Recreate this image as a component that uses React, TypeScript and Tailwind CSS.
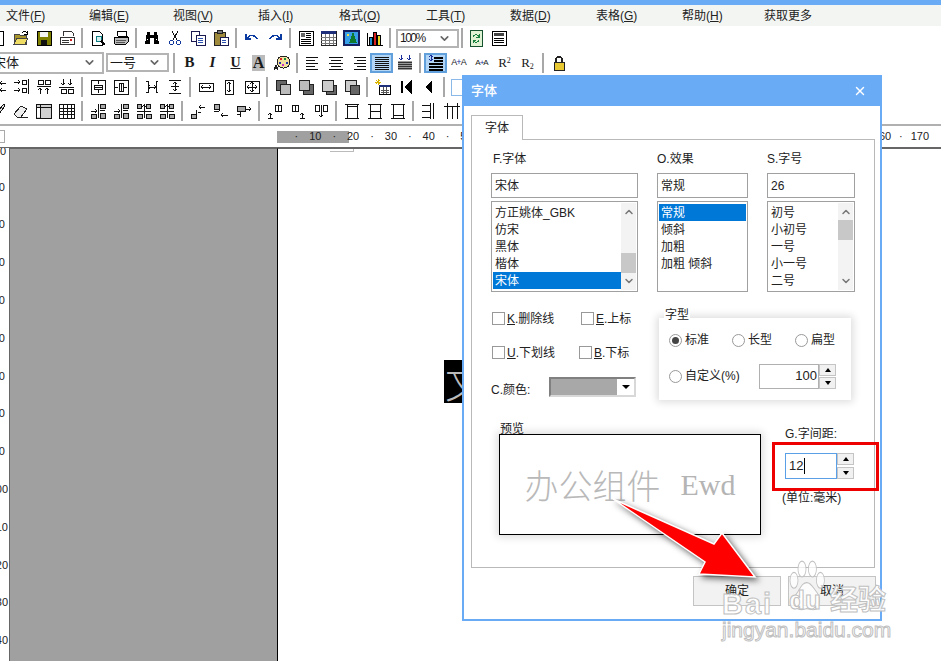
import type { ReactNode } from "react";
import { ChevronDown, ChevronUp, X } from "lucide-react";

const menus = [
  { label: "文件", key: "F", w: "w-[83px]" },
  { label: "编辑", key: "E", w: "w-[84px]" },
  { label: "视图", key: "V", w: "w-[85px]" },
  { label: "插入", key: "I", w: "w-[81px]" },
  { label: "格式", key: "O", w: "w-[87px]" },
  { label: "工具", key: "T", w: "w-[84px]" },
  { label: "数据", key: "D", w: "w-[86px]" },
  { label: "表格", key: "G", w: "w-[86px]" },
  { label: "帮助", key: "H", w: "w-[82px]" },
];

// 16x16 toolbar glyphs, line work only
const lines: Record<string, string> = {
  ar0: "M10 4h6M12 2l-2 2 2 2M10 11h6M12 9l-2 2 2 2",
  ar1: "M1 3h6M5 1l2 2-2 2M9 1h4v4H9zM15 0v15M1 11h6M5 9l2 2-2 2M9 9h4v4H9z",
  ar2: "M2 1h5v4H2zM9 1h5v4H9zM1 7h14M4 9v6M2 11l2-2 2 2M11 9v6M9 11l2-2 2 2",
  ar3: "M4 0v6M2 4l2 2 2-2M11 0v6M9 4l2 2 2-2M0 8h15M2 10h5v4H2zM9 10h5v4H9z",
  box1: "M1 1h14v14H1zM4 6h8v4H4zM8 2v3M8 11v3M4 8h8",
  box2: "M1 1h14v14H1zM6 4h4v8H6zM2 8h3M11 8h3M8 4v8",
  sp1: "M2 2h2v11H2M14 2h-2v11h2M5 8h6M6 6l-2 2 2 2M10 6l2 2-2 2",
  sp2: "M2 1h12M2 14h12M8 3v9M6 5l2-2 2 2M6 10l2 2 2-2M4 7h8",
  wd: "M1 4h14v8H1zM3 8h10M5 6l-2 2 2 2M11 6l2 2-2 2",
  ht: "M4 1h8v14H4zM8 3v10M6 5l2-2 2 2M6 11l2 2 2-2",
  both: "M1 2h14v12H1zM8 3v10M3 8h10M6 5l2-2 2 2M6 11l2 2 2-2M5 6l-2 2 2 2M11 6l2 2-2 2",
  up1: "M3 15v-5M1 12l2-2 2 2M8 2h6v6H8zM11 2v6M1 15h5",
  up2: "M2 2h6v6H2zM5 2v6M12 15v-5M10 12l2-2 2 2M10 15h5",
  up3: "M2 2h4v6H2zM10 2h4v6h-4zM8 2v12M6 12l2 2 2-2",
  fr1: "M1 1h14M1 15h14M3 1v14M13 1v14M3 3h10",
  fr2: "M1 1h14M1 15h14M3 1v14M13 1v14M3 8h10",
  fr3: "M1 1h14M1 15h14M3 1v14M13 1v14M3 12h10",
  tb1: "M1 2h8M1 8h8M1 14h8M9 0v16M12 0v16",
  tb2: "M0 3h16M3 3v13M8 3v13M13 3v13M3 0v3M13 0v3",
  left: "M1 2h12M1 5h9M1 8h12M1 11h9M1 14h12",
  center: "M1 2h14M3 5h10M1 8h14M3 11h10M1 14h14",
  right: "M3 2h12M6 5h9M3 8h12M6 11h9M3 14h12",
  just: "M1 2h14M1 4h14M1 6h14M1 8h14M1 10h14M1 12h14M1 14h14",
};

const shapes: Record<string, ReactNode> = {
  new: <rect x="3" y="1" width="10" height="14" fill="#fff" stroke="#000" />,
  open: (
    <>
      <path d="M1 14V4h5l1 1h6v9z" fill="#a8952c" stroke="#444" />
      <path d="M1 14l3-6h11l-3 6z" fill="#efdc62" stroke="#444" />
      <path d="M9 3c2-2 4-2 5 0M14 1v3h-3" stroke="#000" fill="none" />
    </>
  ),
  save: (
    <>
      <rect x="1" y="1" width="14" height="14" fill="#7f7f00" stroke="#000" />
      <rect x="4" y="2" width="8" height="5" fill="#f4f4f4" />
      <rect x="5" y="10" width="6" height="5" fill="#111" />
    </>
  ),
  fax: (
    <>
      <path d="M4 6V1h8l2 2v3" fill="#fff" stroke="#333" />
      <rect x="1" y="7" width="14" height="7" fill="#fff" stroke="#333" />
      <path d="M3 10h7M3 12h7" stroke="#333" />
      <rect x="11" y="9" width="2" height="2" fill="#c22" />
    </>
  ),
  prev: (
    <>
      <path d="M2 1h7l3 3v11H2z" fill="#fff" stroke="#000" />
      <circle cx="9" cy="9" r="3" fill="#d6eef0" stroke="#0b7d80" />
      <path d="M11 11l4 4" stroke="#000" strokeWidth="2" />
    </>
  ),
  print: (
    <>
      <path d="M4 1h9l1 5H5z" fill="#fff" stroke="#000" />
      <path d="M1 7h14v5l-2 2H2l-1-2z" fill="#bbb" stroke="#000" />
      <path d="M3 10h10M3 12h9" stroke="#555" />
    </>
  ),
  bino: (
    <>
      <path d="M3 2h3v3h4V2h3l2 12h-5V8H6v6H1z" fill="#000" />
      <path d="M3 9h1M12 9h1" stroke="#fff" />
    </>
  ),
  scis: (
    <>
      <path d="M5 1l5 9M11 1L6 10" stroke="#111" />
      <circle cx="4.5" cy="12.5" r="2" fill="none" stroke="#12389c" />
      <circle cx="11.5" cy="12.5" r="2" fill="none" stroke="#12389c" />
    </>
  ),
  copy: (
    <>
      <rect x="1" y="1" width="8" height="10" fill="#fff" stroke="#1a1a50" />
      <rect x="6" y="5" width="9" height="10" fill="#fff" stroke="#1a1a50" />
      <path d="M8 8h5M8 10h5M8 12h5" stroke="#2b50b0" />
    </>
  ),
  paste: (
    <>
      <rect x="1" y="2" width="11" height="13" fill="#a08a3c" stroke="#222" />
      <rect x="4" y="0" width="5" height="3" fill="#777" stroke="#222" />
      <rect x="7" y="7" width="8" height="8" fill="#fff" stroke="#1a1a50" />
      <path d="M9 10h4M9 12h4" stroke="#2b50b0" />
    </>
  ),
  undo: <path d="M3 8c3-4 8-3 10 1M2 4v5h5" fill="none" stroke="#0b3aa0" strokeWidth="1.5" />,
  redo: <path d="M13 8c-3-4-8-3-10 1M14 4v5H9" fill="none" stroke="#0b3aa0" strokeWidth="1.5" />,
  tbox: (
    <>
      <rect x="1" y="1" width="14" height="14" fill="#fff" stroke="#000" />
      <rect x="3" y="3" width="4" height="4" fill="#666" />
      <path d="M8 3h5M8 5h5M8 7h5M3 9h10M3 11h10M3 13h10" stroke="#000" />
    </>
  ),
  table: (
    <>
      <rect x="0" y="1" width="15" height="14" fill="#fff" stroke="#222" />
      <rect x="0" y="1" width="15" height="3" fill="#1f2f7a" />
      <path d="M0 7h15M0 10h15M0 13h15M4 4v11M8 4v11M12 4v11" stroke="#777" />
    </>
  ),
  pic: (
    <>
      <rect x="0" y="1" width="15" height="14" fill="#37a0e8" stroke="#14205f" strokeWidth="2" />
      <path d="M9 2l4 11H5z" fill="#0e7a2e" />
      <rect x="3" y="4" width="2" height="2" fill="#f3e04a" />
    </>
  ),
  chart: (
    <>
      <path d="M0 15h16M0 3v12" stroke="#000" />
      <rect x="2" y="7" width="3" height="8" fill="#1c8fd0" stroke="#000" />
      <rect x="6" y="2" width="3" height="13" fill="#d22" stroke="#000" />
      <rect x="10" y="5" width="3" height="10" fill="#e8d820" stroke="#000" />
    </>
  ),
  sync: (
    <>
      <rect x="2" y="0" width="12" height="16" fill="#dff2d4" stroke="#14532d" />
      <path d="M5 7c1-3 5-3 6 0M5 10c1 3 5 3 6 0M11 4v3H8M5 13v-3h3" stroke="#16803c" fill="none" />
    </>
  ),
  doc: (
    <>
      <rect x="1" y="1" width="14" height="14" fill="#fff" stroke="#000" />
      <rect x="3" y="3" width="10" height="3" fill="#444" />
      <path d="M3 8h10M3 10h10M3 12h10" stroke="#000" />
    </>
  ),
  paint: (
    <>
      <ellipse cx="9.5" cy="7" rx="6.5" ry="6" fill="#f3e1a0" stroke="#222" />
      <rect x="6" y="3" width="2" height="2" fill="#d22" />
      <rect x="10" y="3" width="2" height="2" fill="#1a8f3a" />
      <rect x="12" y="7" width="2" height="2" fill="#23a" />
      <rect x="5" y="7" width="2" height="2" fill="#23a" />
      <rect x="8" y="9" width="2" height="2" fill="#c3c" />
      <path d="M0 15l2-5 2 5M1 13h2" stroke="#222" fill="none" />
    </>
  ),
  dist: (
    <>
      <rect x="1" y="6" width="14" height="9" fill="#999" />
      <path d="M1 7h14M1 9h14M1 11h14M1 13h14" stroke="#333" />
      <path d="M4 0v5M2 3l2 2 2-2M12 0v5M10 3l2 2 2-2" stroke="#1c2e9a" fill="none" />
    </>
  ),
  space: (
    <>
      <path d="M6 3h9M6 6h9M1 9h14M1 12h14M1 15h14" stroke="#000" strokeWidth="2" />
      <path d="M3 0v6M1 2l2-2 2 2M1 4l2 2 2-2" stroke="#1c2e9a" fill="none" />
    </>
  ),
  lock: (
    <>
      <path d="M5 7V4c0-3 6-3 6 0v3" fill="none" stroke="#222" strokeWidth="1.5" />
      <rect x="3" y="7" width="10" height="8" fill="#e8c832" stroke="#222" />
    </>
  ),
  ov1: (
    <>
      <rect x="1" y="1" width="10" height="10" fill="#666" stroke="#222" />
      <rect x="5" y="5" width="10" height="10" fill="#bbb" stroke="#222" />
    </>
  ),
  ov2: (
    <>
      <rect x="5" y="5" width="10" height="10" fill="#666" stroke="#222" />
      <rect x="1" y="1" width="10" height="10" fill="#bbb" stroke="#222" />
    </>
  ),
  ov3: (
    <>
      <rect x="5" y="6" width="10" height="9" fill="#666" stroke="#222" />
      <rect x="1" y="1" width="11" height="11" fill="#ccc" stroke="#222" />
    </>
  ),
  ov4: (
    <>
      <rect x="1" y="1" width="11" height="11" fill="#ccc" stroke="#222" />
      <rect x="6" y="6" width="9" height="9" fill="#666" stroke="#222" />
    </>
  ),
  spark: (
    <>
      <path d="M3 0v6M0 3h6M1 1l4 4M5 1L1 5" stroke="#d8b400" />
      <rect x="4" y="6" width="11" height="9" fill="#fff" stroke="#000" />
      <rect x="4" y="6" width="11" height="2" fill="#1f2f7a" />
      <path d="M6 11h8M6 13h8M8 8v7M11 8v7" stroke="#555" />
    </>
  ),
  first: <path d="M3 2h2v12H3zM14 1v14L6 8z" fill="#000" />,
  back: <path d="M11 1v14L4 8z" fill="#000" />,
  pencil: <path d="M14 1l1 2-7 9-3 1 1-3z" fill="#ddd" stroke="#111" />,
  erase: (
    <>
      <path d="M1 11l7-8 6 3-6 8H4z" fill="#eee" stroke="#222" />
      <path d="M4 14h11" stroke="#222" />
    </>
  ),
  tshade: (
    <>
      <rect x="0" y="1" width="15" height="14" fill="#d0d0d0" stroke="#111" />
      <path d="M0 4h15M4 1v14" stroke="#111" />
      <rect x="1" y="5" width="3" height="9" fill="#fff" />
    </>
  ),
  tgrid: (
    <>
      <rect x="0" y="1" width="15" height="14" fill="#fff" stroke="#111" />
      <path d="M0 5h15M0 8h15M0 11h15M4 1v14M8 1v14M12 1v14" stroke="#111" />
    </>
  ),
  col1: (
    <>
      <rect x="10" y="1" width="5" height="4" fill="#aaa" stroke="#111" />
      <rect x="10" y="10" width="5" height="5" fill="#aaa" stroke="#111" />
      <rect x="1" y="11" width="5" height="4" fill="#aaa" stroke="#111" />
      <path d="M10 7h5M8 1v14M1 8h6M5 6l2 2-2 2" stroke="#111" fill="none" />
    </>
  ),
  row1: (
    <>
      <rect x="1" y="1" width="4" height="4" fill="#aaa" stroke="#111" />
      <rect x="10" y="1" width="4" height="4" fill="#aaa" stroke="#111" />
      <rect x="1" y="11" width="5" height="4" fill="#aaa" stroke="#111" />
      <rect x="10" y="11" width="5" height="4" fill="#aaa" stroke="#111" />
      <path d="M1 8h14M8 1v14M6 4l2-2 2 2" stroke="#111" fill="none" />
    </>
  ),
  cell1: (
    <>
      <rect x="1" y="11" width="5" height="4" fill="#aaa" stroke="#111" />
      <path d="M6 7v8M9 4h6M11 2l-2 2 2 2M8 9h3" stroke="#111" fill="none" />
    </>
  ),
  cell2: (
    <>
      <rect x="1" y="1" width="5" height="5" fill="#aaa" stroke="#111" />
      <path d="M6 6v2M1 8h5M8 12h7M10 10l-2 2 2 2" stroke="#111" fill="none" />
    </>
  ),
  cell3: (
    <>
      <rect x="1" y="3" width="8" height="5" fill="#aaa" stroke="#111" />
      <path d="M4 8v6M1 11h3M9 6h6M13 4l2 2-2 2" stroke="#111" fill="none" />
    </>
  ),
};

const texts: Record<string, ReactNode> = {
  B: <span className="font-['Liberation_Serif',serif] text-[15px] font-bold">B</span>,
  I: <span className="font-['Liberation_Serif',serif] text-[15px] font-bold italic">I</span>,
  U: <span className="font-['Liberation_Serif',serif] text-[14px] font-bold underline">U</span>,
  A: <span className="bg-[#bbb] px-[1px] font-['Liberation_Serif',serif] text-[16px] leading-[16px] font-bold">A</span>,
  wide: <span className="text-[9px] tracking-[-1px] whitespace-nowrap">A<span className="text-[#1c2e9a]">+</span>A</span>,
  narrow: <span className="text-[8px] tracking-[-1px] whitespace-nowrap">A<span className="text-[#1c2e9a]">+</span>A</span>,
  sup: <span className="font-['Liberation_Serif',serif] text-[13px]">R<sup className="text-[8px]">2</sup></span>,
  sub: <span className="font-['Liberation_Serif',serif] text-[13px]">R<sub className="text-[8px]">2</sub></span>,
};

function Icon({ name }: { name: string }) {
  if (texts[name]) return <>{texts[name]}</>;
  return (
    <svg width="16" height="16" viewBox="0 0 16 16" shapeRendering="crispEdges" className="overflow-visible">
      {lines[name] ? <path d={lines[name]} fill="none" stroke="#111" /> : shapes[name]}
    </svg>
  );
}

function Tools({ items }: { items: string[] }) {
  return (
    <>
      {items.map((it, i) =>
        it === "|" ? (
          <div key={i} className="flex w-[8px] shrink-0 justify-center">
            <div className="h-[20px] w-[2px] bg-[#a8a8a8]" />
          </div>
        ) : (
          <div
            key={i}
            className={
              it === "just" || it === "space"
                ? "flex h-[20px] w-[23px] shrink-0 items-center justify-center border-2 border-[#62a0dc] bg-[#b3d5f5]"
                : "flex h-[20px] w-[23px] shrink-0 items-center justify-center"
            }
          >
            <Icon name={it} />
          </div>
        )
      )}
    </>
  );
}

function Combo({ text, cls }: { text: string; cls: string }) {
  return (
    <div className={"flex shrink-0 items-center justify-between border-2 border-[#b4b4b4] bg-white pl-[2px] pr-[6px] " + cls}>
      <span className="whitespace-nowrap">{text}</span>
      <ChevronDown size={13} strokeWidth={3} className="text-[#666]" />
    </div>
  );
}

function Listbox({
  items,
  selected,
  thumb,
  cls,
}: {
  items: string[];
  selected?: number;
  thumb?: string;
  cls: string;
}) {
  return (
    <div className={"flex h-[91px] justify-between border border-[#a0a0a0] bg-white p-[1px] " + cls}>
      <div className="flex-1 overflow-hidden pt-[1px]">
        {items.map((t, i) => (
          <div
            key={t}
            className={
              i === selected
                ? "flex h-[17px] items-center bg-[#0078d7] pl-[2px] text-white"
                : "flex h-[17px] items-center pl-[2px] text-[#222]"
            }
          >
            {t}
          </div>
        ))}
      </div>
      {thumb && (
        <div className="flex w-[15px] flex-col items-center justify-between bg-[#f2f3f2] text-[#777]">
          <ChevronUp size={12} strokeWidth={3} className="mt-[3px]" />
          <ChevronDown size={12} strokeWidth={3} className="mb-[3px]" />
          <div className={"absolute h-[20px] w-[15px] bg-[#c8c8c8] " + thumb} />
        </div>
      )}
    </div>
  );
}

function Check({ k, label, cls }: { k: string; label: string; cls: string }) {
  return (
    <div className={"flex items-center " + cls}>
      <div className="h-[13px] w-[13px] border border-[#999] bg-white" />
      <span className="ml-[2px] text-[#222]">
        <span className="underline">{k}</span>.{label}
      </span>
    </div>
  );
}

function Radio({ label, on, cls }: { label: string; on?: boolean; cls: string }) {
  return (
    <div className={"flex items-center " + cls}>
      <div className="flex h-[13px] w-[13px] items-center justify-center rounded-full border border-[#999] bg-white">
        {on && <div className="h-[7px] w-[7px] rounded-full bg-[#444]" />}
      </div>
      <span className="ml-[3px] text-[#222]">{label}</span>
    </div>
  );
}

function Spin() {
  return (
    <div className="flex w-[17px] flex-col justify-between">
      <div className="flex h-[12px] items-center justify-center border border-[#c4c4c4] bg-[#f1f1f1]">
        <div className="h-0 w-0 border-x-[3px] border-b-[4px] border-x-transparent border-b-black" />
      </div>
      <div className="flex h-[12px] items-center justify-center border border-[#c4c4c4] bg-[#f1f1f1]">
        <div className="h-0 w-0 border-x-[3px] border-t-[4px] border-x-transparent border-t-black" />
      </div>
    </div>
  );
}

function FontDialog() {
  return (
    <div className="absolute left-[462px] top-[75px] flex h-[546px] w-[420px] flex-col border-x-2 border-b-2 border-[#6aabf6] bg-white text-[12px]">
      <div className="-mx-[2px] flex h-[31px] shrink-0 items-center justify-between bg-[#6aabf6] pl-[9px] pr-[15px] text-white">
        <span className="text-[13px] font-medium">字体</span>
        <X size={14} strokeWidth={2.5} />
      </div>
      <div className="flex flex-1 flex-col pl-[7px] pr-[5px] pt-[9px]">
        <div className="relative z-10 -mb-px flex h-[25px] w-[52px] items-center justify-center border border-b-0 border-[#b9b9b9] bg-white text-[#222]">
          字体
        </div>
        <div className="h-[429px] border border-[#b9b9b9] px-[19px] pt-[10px]">
          <div className="flex gap-[19px]">
            <div className="w-[147px]">
              <div className="h-[18px] pl-[2px] leading-[18px] text-[#222]">F.字体</div>
              <div className="mt-[5px] flex h-[25px] items-center border border-[#a0a0a0] pl-[3px] text-[#222]">宋体</div>
              <Listbox
                cls="relative mt-[3px]"
                items={["方正姚体_GBK", "仿宋", "黑体", "楷体", "宋体"]}
                selected={4}
                thumb="top-[51px] right-[1px]"
              />
            </div>
            <div className="w-[91px]">
              <div className="h-[18px] leading-[18px] text-[#222]">O.效果</div>
              <div className="mt-[5px] flex h-[25px] items-center border border-[#a0a0a0] pl-[3px] text-[#222]">常规</div>
              <Listbox cls="mt-[3px]" items={["常规", "倾斜", "加粗", "加粗 倾斜"]} selected={0} />
            </div>
            <div className="w-[88px]">
              <div className="h-[18px] leading-[18px] text-[#222]">S.字号</div>
              <div className="mt-[5px] flex h-[25px] items-center border border-[#a0a0a0] pl-[3px] text-[#222]">26</div>
              <Listbox
                cls="relative mt-[3px]"
                items={["初号", "小初号", "一号", "小一号", "二号"]}
                thumb="top-[18px] right-[1px]"
              />
            </div>
          </div>

          <div className="mt-[20px] flex">
            <div className="w-[168px]">
              <div className="flex h-[13px] items-center">
                <Check k="K" label="删除线" cls="ml-[1px] w-[89px]" />
                <Check k="E" label="上标" cls="" />
              </div>
              <div className="mt-[21px] flex h-[13px] items-center">
                <Check k="U" label="下划线" cls="ml-[1px] w-[87px]" />
                <Check k="B" label="下标" cls="" />
              </div>
              <div className="mt-[18px] flex h-[20px] items-center">
                <span className="mt-[6px] w-[58px] text-[#222]">C.颜色:</span>
                <div className="flex h-[20px] w-[87px] items-stretch border-2 border-[#808080] border-b-[#d8d8d8] border-r-[#d8d8d8] bg-[#a8a8a8]">
                  <div className="flex-1" />
                  <div className="flex w-[17px] items-center justify-center bg-white">
                    <div className="h-0 w-0 border-x-[4px] border-t-[4px] border-x-transparent border-t-black" />
                  </div>
                </div>
              </div>
            </div>
            <div className="relative mt-[6px] h-[82px] w-[192px] bg-white pl-[10px] pt-[15px] shadow-[0_0_8px_2px_#dcdcdc]">
              <span className="absolute -top-[12px] left-[5px] bg-white px-px text-[#222]">字型</span>
              <div className="flex h-[14px] items-center">
                <Radio label="标准" on cls="w-[63px]" />
                <Radio label="长型" cls="w-[63px]" />
                <Radio label="扁型" cls="" />
              </div>
              <div className="mt-[16px] flex h-[26px] items-center justify-between pr-[15px]">
                <Radio label="自定义(%)" cls="" />
                <div className="flex h-[25px]">
                  <div className="flex w-[60px] items-center justify-end border border-[#b0b0b0] pr-[1px] text-[13px] text-[#222]">100</div>
                  <Spin />
                </div>
              </div>
            </div>
          </div>

          <div className="mt-[26px] flex">
            <div className="relative ml-[8px] mt-[8px] flex h-[101px] w-[262px] items-center justify-center gap-[20px] border border-black bg-white shadow-[0_0_8px_2px_#dcdcdc]">
              <span className="absolute -top-[15px] left-0 text-[#222]">预览</span>
              <span className="font-['Noto_Sans_CJK_SC',sans-serif] text-[34px] font-light text-[#b9b9b9]">办公组件</span>
              <span className="font-['Liberation_Serif',serif] text-[30px] text-[#b4b4b4]">Ewd</span>
            </div>
            <div className="ml-[21px]">
              <div className="h-[16px] pl-[3px] leading-[16px] text-[#222]">G.字间距:</div>
              <div className="ml-[3px] mt-[11px] flex h-[26px]">
                <div className="flex w-[52px] items-center border border-[#5aa0e8] pl-[3px] text-[13px] text-[#222]">
                  12<span className="ml-px h-[16px] w-px bg-black" />
                </div>
                <Spin />
              </div>
              <div className="mt-[11px] h-[16px] leading-[16px] text-[#222]">(单位:毫米)</div>
            </div>
          </div>
        </div>
        <div className="-mr-[1px] mt-[8px] flex justify-end gap-[7px]">
          <div className="flex h-[30px] w-[88px] items-center justify-center border border-[#c4c4c4] bg-[#f1f2f1] text-[#222]">确定</div>
          <div className="flex h-[30px] w-[88px] items-center justify-center border border-[#c4c4c4] bg-[#f1f2f1] text-[#222]">取消</div>
        </div>
      </div>
    </div>
  );
}

function Watermark() {
  const wm = "text-white/85 [-webkit-text-stroke:1px_#c0c0c0]";
  return (
    <div className="pointer-events-none absolute left-[720px] top-[560px] h-[84px] w-[172px] font-['Liberation_Sans',sans-serif]">
      <span className={"absolute left-[2px] top-[23px] text-[29px] font-bold tracking-[2px] " + wm}>Bai</span>
      <svg className="absolute left-[66px] top-0" width="40" height="52" viewBox="0 0 50 46" preserveAspectRatio="none">
        <g fill="#ffffff" fillOpacity="0.75" stroke="#c0c0c0">
          <ellipse cx="10" cy="18" rx="5" ry="7" />
          <ellipse cx="20" cy="8" rx="5" ry="7" />
          <ellipse cx="33" cy="8" rx="5" ry="7" />
          <ellipse cx="43" cy="18" rx="5" ry="7" />
          <path d="M26 20c-6 0-8 5-12 9-6 5-4 15 5 15 4 0 5-1 7-1s4 1 8 1c9 0 10-10 5-15-5-4-7-9-13-9z" />
        </g>
      </svg>
      <span className={"absolute left-[69px] top-[21px] text-[26px] font-bold " + wm}>du</span>
      <span className={"absolute left-[110px] top-[22px] font-['Noto_Sans_CJK_SC',sans-serif] text-[28px] font-bold leading-[32px] " + wm}>经验</span>
      <span className={"absolute left-[2px] top-[58px] whitespace-nowrap text-[21px] leading-[24px] " + wm}>jingyan.baidu.com</span>
    </div>
  );
}

export default function App() {
  const ruler = Array.from({ length: 34 }, (_, i) => (i % 2 === 0 ? "·" : String((i + 1) * 5)));
  const side = ["10", "20", "30", "40", "50", "60", "70", "80", "100", "110", "120", "130", "140", "150"];

  return (
    <div className="relative h-[661px] w-[941px] overflow-hidden bg-white font-['Liberation_Sans','Noto_Sans_CJK_SC',sans-serif] text-[12px] text-[#1a1a1a]">
      <div className="h-[5px] bg-[#6aabf6]" />
      <div className="flex h-[21px] items-center bg-[#f3f5f3] pl-[6px] text-[#222]">
        {menus.map((m) => (
          <div key={m.key} className={"shrink-0 " + m.w}>
            {m.label}(<span className="underline">{m.key}</span>)
          </div>
        ))}
        <div className="shrink-0">获取更多</div>
      </div>

      <div className="overflow-hidden border-b-2 border-[#b0b0b0] pb-[2px]">
        <div className="-ml-[14px] flex h-[24px] items-center">
          <Tools items={["new", "open", "save", "fax", "|", "prev", "print", "|", "bino", "scis", "copy", "paste", "|", "undo", "redo", "|", "tbox", "table", "pic", "chart", "|"]} />
          <Combo text="100%" cls="ml-[2px] h-[19px] w-[63px] tracking-[-1.5px]" />
          <div className="ml-[2px] h-[20px] w-[2px] bg-[#a8a8a8]" />
          <div className="w-[1px]" />
          <Tools items={["sync", "doc"]} />
        </div>
        <div className="-ml-[11px] flex h-[25px] items-center">
          <Combo text="宋体" cls="h-[22px] w-[115px] text-[13px]" />
          <Combo text="一号" cls="ml-[2px] h-[19px] w-[63px] text-[13px]" />
          <div className="w-[1px]" />
          <Tools items={["|", "B", "I", "U", "A", "paint", "|", "left", "center", "right", "just", "dist", "|", "space", "wide", "narrow", "sup", "sub", "|", "lock"]} />
        </div>
        <div className="-ml-[14px] flex h-[24px] items-center">
          <Tools items={["ar0", "ar1", "ar2", "ar3", "|", "box1", "box2", "|", "sp1", "sp2", "|", "wd", "ht", "both", "|", "ov1", "ov2", "ov3", "ov4", "|", "spark", "first", "back", "|"]} />
          <div className="ml-[3px] h-[17px] w-[30px] border border-[#8ab8e8]" />
        </div>
        <div className="-ml-[14px] flex h-[23px] items-center">
          <Tools items={["pencil", "erase", "tshade", "tgrid", "|", "col1", "col1", "row1", "row1", "|", "cell1", "cell2", "cell3", "|", "up1", "up2", "up3", "|", "fr1", "fr2", "fr3", "|", "tb1", "tb2"]} />
        </div>
      </div>

      <div className="relative flex h-[22px] items-center border-b border-[#666] text-[11px] text-[#222]">
        <div className="absolute left-0 top-[4px] h-[13px] w-[5px] border border-l-0 border-[#aaa]" />
        <div className="absolute left-[277px] top-[5px] h-[12px] w-[72px] bg-[#a0a0a0]" />
        <div className="relative ml-[287px] flex">
          {ruler.map((t, i) => (
            <div key={i} className="flex w-[18.9px] shrink-0 justify-center">
              {t}
            </div>
          ))}
        </div>
      </div>

      <div className="flex h-[513px]">
        <div className="w-[9px] shrink-0 overflow-hidden text-[11px] text-[#222]">
          <div className="h-[20px] leading-[6px]">0</div>
          {side.map((n) => (
            <div
              key={n}
              className={
                n.length > 2
                  ? "flex h-[37.8px] items-center justify-end pr-[1px]"
                  : "flex h-[37.8px] items-center justify-end pr-[4px]"
              }
            >
              {n}
            </div>
          ))}
        </div>
        <div className="w-[269px] shrink-0 border-l border-r border-t border-[#666] border-r-black bg-[#a0a0a0]" />
        <div className="relative flex-1 border-t border-[#666]">
          <div className="ml-[52px] h-[3px] w-[24px] border-b border-r border-[#bbb]" />
          <div className="ml-[166px] mt-[208px] h-[43px] w-[18px] overflow-hidden bg-black font-['Noto_Sans_CJK_SC',sans-serif] text-[40px] font-light leading-[43px] text-[#bbbbbb]">
            <span className="ml-[1px] whitespace-nowrap">文</span>
          </div>
        </div>
      </div>

      <FontDialog />

      <div className="absolute left-[772px] top-[442px] h-[49px] w-[107px] border-[3px] border-[#ee0000]" />

      <svg className="pointer-events-none absolute left-0 top-0" width="941" height="661">
        <polygon
          points="613,499 714,544 722,533 755,577 699,574 705,562"
          fill="#ff0000"
          stroke="#ffffff"
          strokeWidth="1.5"
          style={{ filter: "drop-shadow(3px 3px 3px rgba(0,0,0,0.6))" }}
        />
      </svg>

      <Watermark />
    </div>
  );
}
